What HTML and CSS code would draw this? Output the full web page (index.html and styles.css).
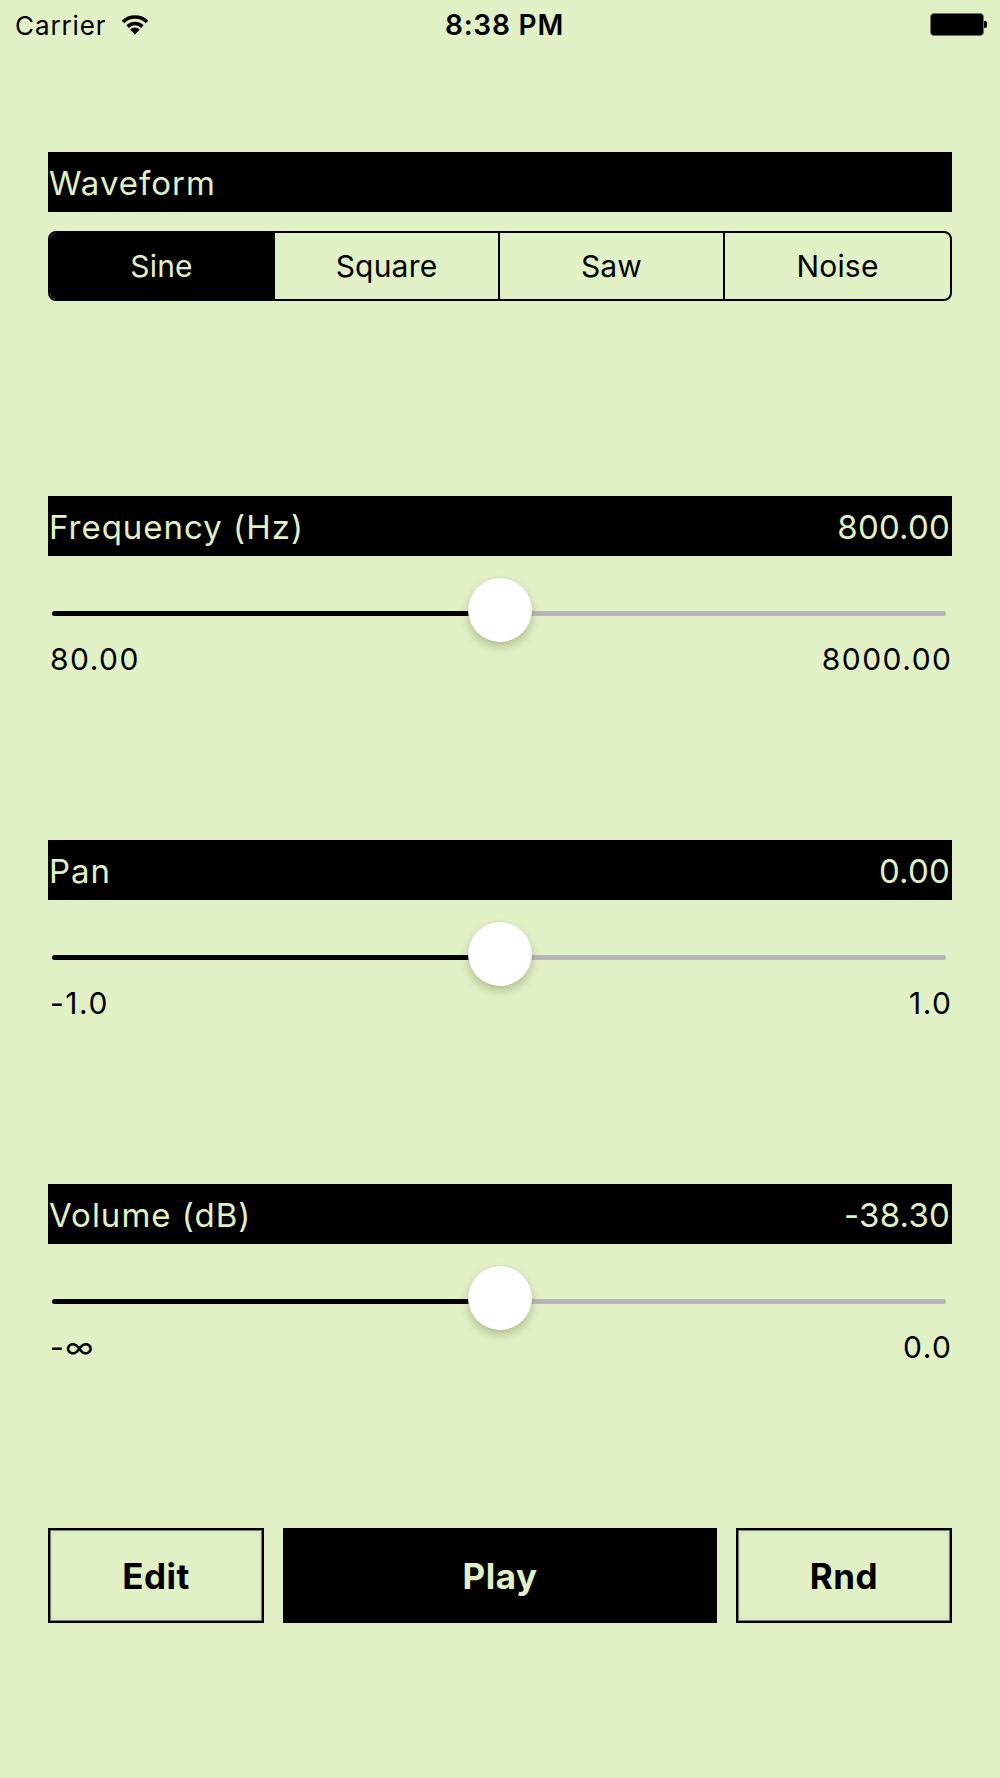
FILE: index.html
```html
<!DOCTYPE html>
<html lang="en">
  <head>
    <meta charset="UTF-8" />
    <meta name="viewport" content="width=device-width, initial-scale=1.0" />
    <title>Tone Generator</title>
    <link rel="stylesheet" href="styles.css">
  </head>
  <body>
    <div class="status-bar">
      <div class="carrier">
        Carrier
        <svg class="wifi" width="28" height="21" viewBox="0 0 28 21">
          <path d="M2 8 A17 17 0 0 1 26 8" fill="none" stroke="#000" stroke-width="3.6" />
          <path d="M6.6 12.6 A10.5 10.5 0 0 1 21.4 12.6" fill="none" stroke="#000" stroke-width="3.6" />
          <path d="M14 20.5 L9.2 15.6 A6.8 6.8 0 0 1 18.8 15.6 Z" fill="#000" />
        </svg>
      </div>
      <div class="clock">8:38 PM</div>
      <div class="battery"><span class="battery-body"></span><span class="battery-tip"></span></div>
    </div>

    <main class="panel">
      <section class="waveform">
        <div class="bar"><span>Waveform</span></div>
        <div class="segments">
          <div class="segment selected">Sine</div>
          <div class="segment">Square</div>
          <div class="segment">Saw</div>
          <div class="segment">Noise</div>
        </div>
      </section>

      <section class="param">
        <div class="bar"><span>Frequency (Hz)</span><span class="value">800.00</span></div>
        <div class="slider">
          <div class="track" style="--value: 50%"></div>
          <div class="knob" style="left: 50%"></div>
        </div>
        <div class="range"><span>80.00</span><span>8000.00</span></div>
      </section>

      <section class="param">
        <div class="bar"><span>Pan</span><span class="value">0.00</span></div>
        <div class="slider">
          <div class="track" style="--value: 50%"></div>
          <div class="knob" style="left: 50%"></div>
        </div>
        <div class="range"><span>-1.0</span><span>1.0</span></div>
      </section>

      <section class="param">
        <div class="bar"><span>Volume (dB)</span><span class="value">-38.30</span></div>
        <div class="slider">
          <div class="track" style="--value: 50%"></div>
          <div class="knob" style="left: 50%"></div>
        </div>
        <div class="range"><span>-∞</span><span>0.0</span></div>
      </section>

      <div class="actions">
        <button class="btn outline">Edit</button>
        <button class="btn solid">Play</button>
        <button class="btn outline">Rnd</button>
      </div>
    </main>
  </body>
</html>
```

FILE: styles.css
```css
html,
body {
  margin: 0;
  padding: 0;
  background: #e1f0c5;
  font-family: Inter, "Noto Sans", sans-serif;
  color: #000;
}
.status-bar {
  height: 50px;
  display: flex;
  align-items: center;
  justify-content: space-between;
  padding: 0 13px 0 15px;
  position: relative;
  font-size: 26px;
  letter-spacing: 0.9px;
}
.carrier {
  display: flex;
  align-items: center;
  gap: 14px;
}
.wifi {
  margin-top: -2px;
}
.clock {
  position: absolute;
  left: 9px;
  right: 0;
  text-align: center;
  font-size: 28px;
  font-weight: 600;
  letter-spacing: 0.8px;
}
.battery {
  display: flex;
  align-items: center;
  margin-top: -2px;
}
.battery-body {
  width: 52px;
  height: 21px;
  border-radius: 4px;
  background: #000;
  border: 1px solid #6d7760;
}
.battery-tip {
  width: 3px;
  height: 7px;
  border-radius: 0 2px 2px 0;
  background: #000;
}
.panel {
  padding: 102px 48px 0;
}
.bar {
  height: 60px;
  background: #000;
  color: #e1f0c5;
  display: flex;
  align-items: center;
  justify-content: space-between;
  padding: 2px 2px 0 1px;
  box-sizing: border-box;
  font-size: 33px;
  letter-spacing: 1px;
}
.bar .value {
  letter-spacing: 0.2px;
}
.segments {
  margin-top: 19px;
  height: 70px;
  display: grid;
  grid-template-columns: repeat(4, 1fr);
  border: 2px solid #000;
  border-radius: 8px;
  overflow: hidden;
  box-sizing: border-box;
}
.segment {
  display: flex;
  align-items: center;
  justify-content: center;
  font-size: 30px;
  letter-spacing: 0.2px;
  border-right: 2px solid #000;
}
.segment:last-child {
  border-right: none;
}
.segment.selected {
  background: #000;
  color: #e1f0c5;
}
.param {
  margin-top: 195px;
}
.param + .param {
  margin-top: 164px;
}
.slider {
  position: relative;
  height: 66px;
  margin-top: 22px;
  display: flex;
  align-items: center;
  padding: 0 6px 0 4px;
}
.track {
  flex: 1;
  height: 5px;
  margin-top: 4px;
  border-radius: 3px;
  background: linear-gradient(to right, #000 var(--value), #b6b6b4 var(--value));
}
.knob {
  position: absolute;
  top: 0;
  width: 64px;
  height: 64px;
  margin-left: -32px;
  border-radius: 50%;
  background: #fff;
  box-shadow: 0 5px 8px rgba(70, 90, 30, 0.3), 0 0 1px rgba(0, 0, 0, 0.2);
}
.range {
  display: flex;
  justify-content: space-between;
  margin-top: -2px;
  padding: 0 1px 0 2px;
  font-size: 30px;
  line-height: 34px;
  letter-spacing: 1.5px;
}
.range span:last-child {
  margin-right: -1.5px;
}
.actions {
  margin-top: 164px;
  display: flex;
  gap: 19px;
}
.btn {
  height: 95px;
  font-family: Inter, "Noto Sans", sans-serif;
  font-size: 35px;
  font-weight: 700;
  letter-spacing: 0.5px;
  padding: 0;
  cursor: pointer;
  box-sizing: border-box;
}
.btn.outline {
  width: 216px;
  background: #e1f0c5;
  color: #000;
  border: 2px solid #000;
  box-shadow: inset 0 0 0 1px rgba(0, 0, 0, 0.45), inset 0 0 6px rgba(0, 0, 0, 0.08);
}
.btn.solid {
  flex: 1;
  background: #000;
  color: #e1f0c5;
  border: none;
}
```
